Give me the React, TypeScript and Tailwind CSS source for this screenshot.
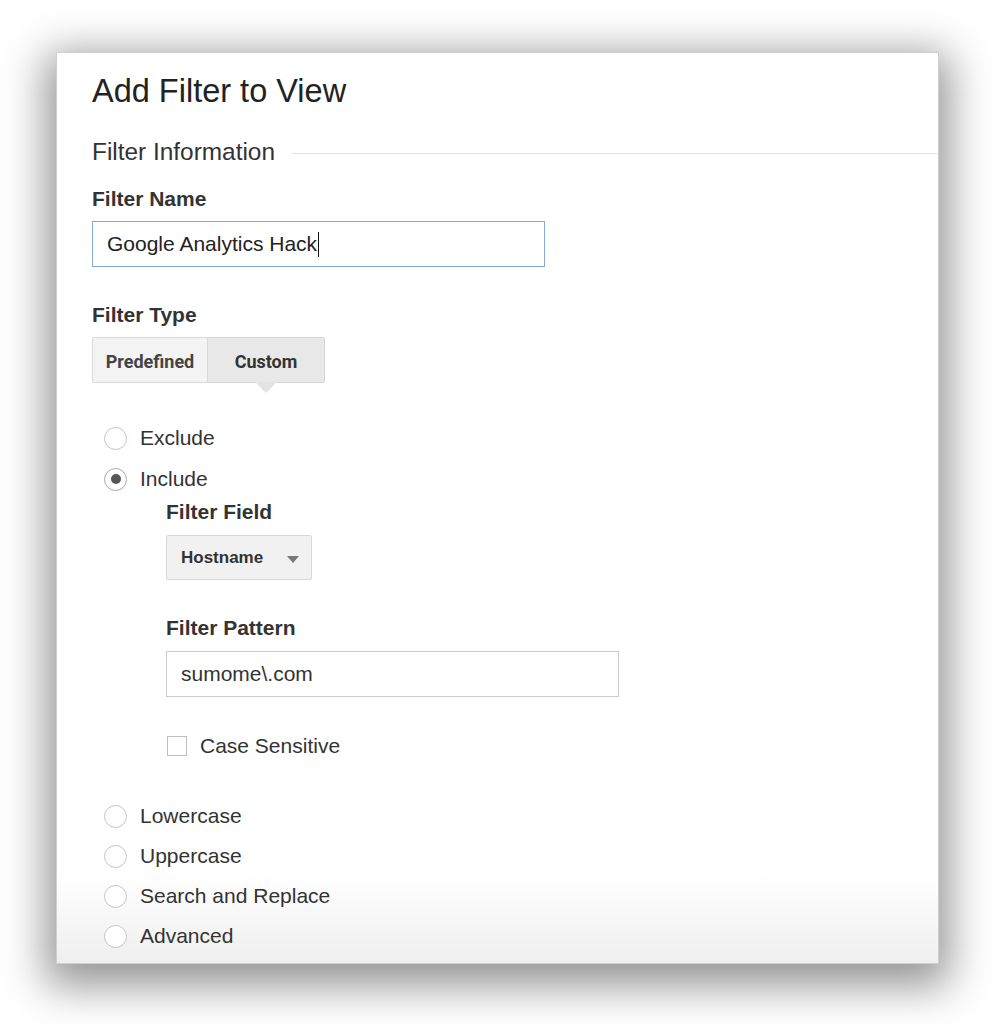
import React from 'react'

const font = { fontFamily: '"Liberation Sans", Arial, Helvetica, sans-serif' }
const tabFont = { fontFamily: 'Roboto, "Liberation Sans", sans-serif' }

function Radio({ label, checked = false }: { label: string; checked?: boolean }) {
    return (
        <div className="flex flex-row items-center h-[30px] pl-[12px]">
            <span
                className={
                    checked
                        ? 'flex items-center justify-center w-[23px] h-[23px] rounded-full border border-[#a8a8a8] bg-white'
                        : 'flex items-center justify-center w-[23px] h-[23px] rounded-full border border-[#c4c4c4] bg-white'
                }
            >
                {checked && <span className="w-[10px] h-[10px] rounded-full bg-[#555]" />}
            </span>
            <span className="ml-[13px] text-[21px] text-[#333]">{label}</span>
        </div>
    )
}

function Label({ children, className = '' }: { children: React.ReactNode; className?: string }) {
    return <div className={'text-[21px] leading-[26px] font-bold text-[#333] ' + className}>{children}</div>
}

export default function App() {
    return (
        <div className="w-[995px] h-[1024px] bg-white pt-[52px] pl-[56px]" style={font}>
            <div className="w-[883px] h-[912px] border border-[#cfcfcf] shadow-[0_12px_40px_10px_rgba(0,0,0,0.42)] bg-[linear-gradient(to_bottom,#ffffff_90%,#efefef)]">
                <div className="flex flex-col pl-[35px] pt-[18px]">
                    <h1 className="text-[32.5px] leading-[40px] text-[#222] font-normal">Add Filter to View</h1>

                    {/* section header with rule */}
                    <div className="flex flex-row items-center mt-[26px] h-[30px]">
                        <span className="text-[24.4px] text-[#333]">Filter Information</span>
                        <span className="flex-1 h-px bg-[#e3e3e3] ml-[17px] mt-[3px]" />
                    </div>

                    <Label className="mt-[19px]">Filter Name</Label>
                    <div className="mt-[9px] w-[453px] h-[46px] border border-[#84a9db] flex items-center pl-[14px]">
                        <span className="text-[21px] text-[#222]">Google Analytics Hack</span>
                        <span className="w-px h-[25px] bg-[#111] ml-[1px]" />
                    </div>

                    <Label className="mt-[35px]">Filter Type</Label>
                    <div className="mt-[9px] flex flex-row">
                        <div className="w-[116px] h-[46px] flex items-center justify-center pt-[3px] bg-[#f3f3f3] border border-[#dadada] rounded-l-[2px] text-[18px] font-bold text-[#444]" style={tabFont}>
                            Predefined
                        </div>
                        <div className="relative w-[117px] h-[46px] flex items-center justify-center pt-[3px] bg-[#e8e8e8] border border-l-0 border-[#d6d6d6] rounded-r-[2px] text-[18px] font-bold text-[#333]" style={tabFont}>
                            Custom
                            <span className="absolute left-1/2 -translate-x-1/2 top-full w-0 h-0 border-l-[11px] border-r-[11px] border-t-[11px] border-l-transparent border-r-transparent border-t-[#e3e3e3]" />
                        </div>
                    </div>

                    <div className="mt-[40px] flex flex-col gap-[11px]">
                        <Radio label="Exclude" />
                        <Radio label="Include" checked />
                    </div>

                    <div className="flex flex-col pl-[74px]">
                        <Label className="mt-[5px]">Filter Field</Label>
                        <div className="mt-[10px] w-[146px] h-[45px] flex flex-row items-center bg-[#f1f1f1] border border-[#d8d8d8] rounded-[2px] pl-[14px]">
                            <span className="text-[17px] font-bold text-[#333]">Hostname</span>
                            <svg className="ml-[24px] mt-[3px]" width="12" height="7" viewBox="0 0 12 7">
                                <path d="M0 0 L12 0 L6 7 Z" fill="#777" />
                            </svg>
                        </div>

                        <Label className="mt-[35px]">Filter Pattern</Label>
                        <div className="mt-[10px] w-[453px] h-[46px] border border-[#cbcbcb] flex items-center pl-[14px]">
                            <span className="text-[21px] text-[#333]">sumome\.com</span>
                        </div>

                        <div className="mt-[34px] flex flex-row items-center h-[30px]">
                            <span className="ml-[1px] w-[20px] h-[20px] border border-[#bdbdbd] bg-white" />
                            <span className="ml-[13px] text-[21px] text-[#333]">Case Sensitive</span>
                        </div>
                    </div>

                    <div className="mt-[40px] flex flex-col gap-[10px]">
                        <Radio label="Lowercase" />
                        <Radio label="Uppercase" />
                        <Radio label="Search and Replace" />
                        <Radio label="Advanced" />
                    </div>
                </div>
            </div>
        </div>
    )
}
